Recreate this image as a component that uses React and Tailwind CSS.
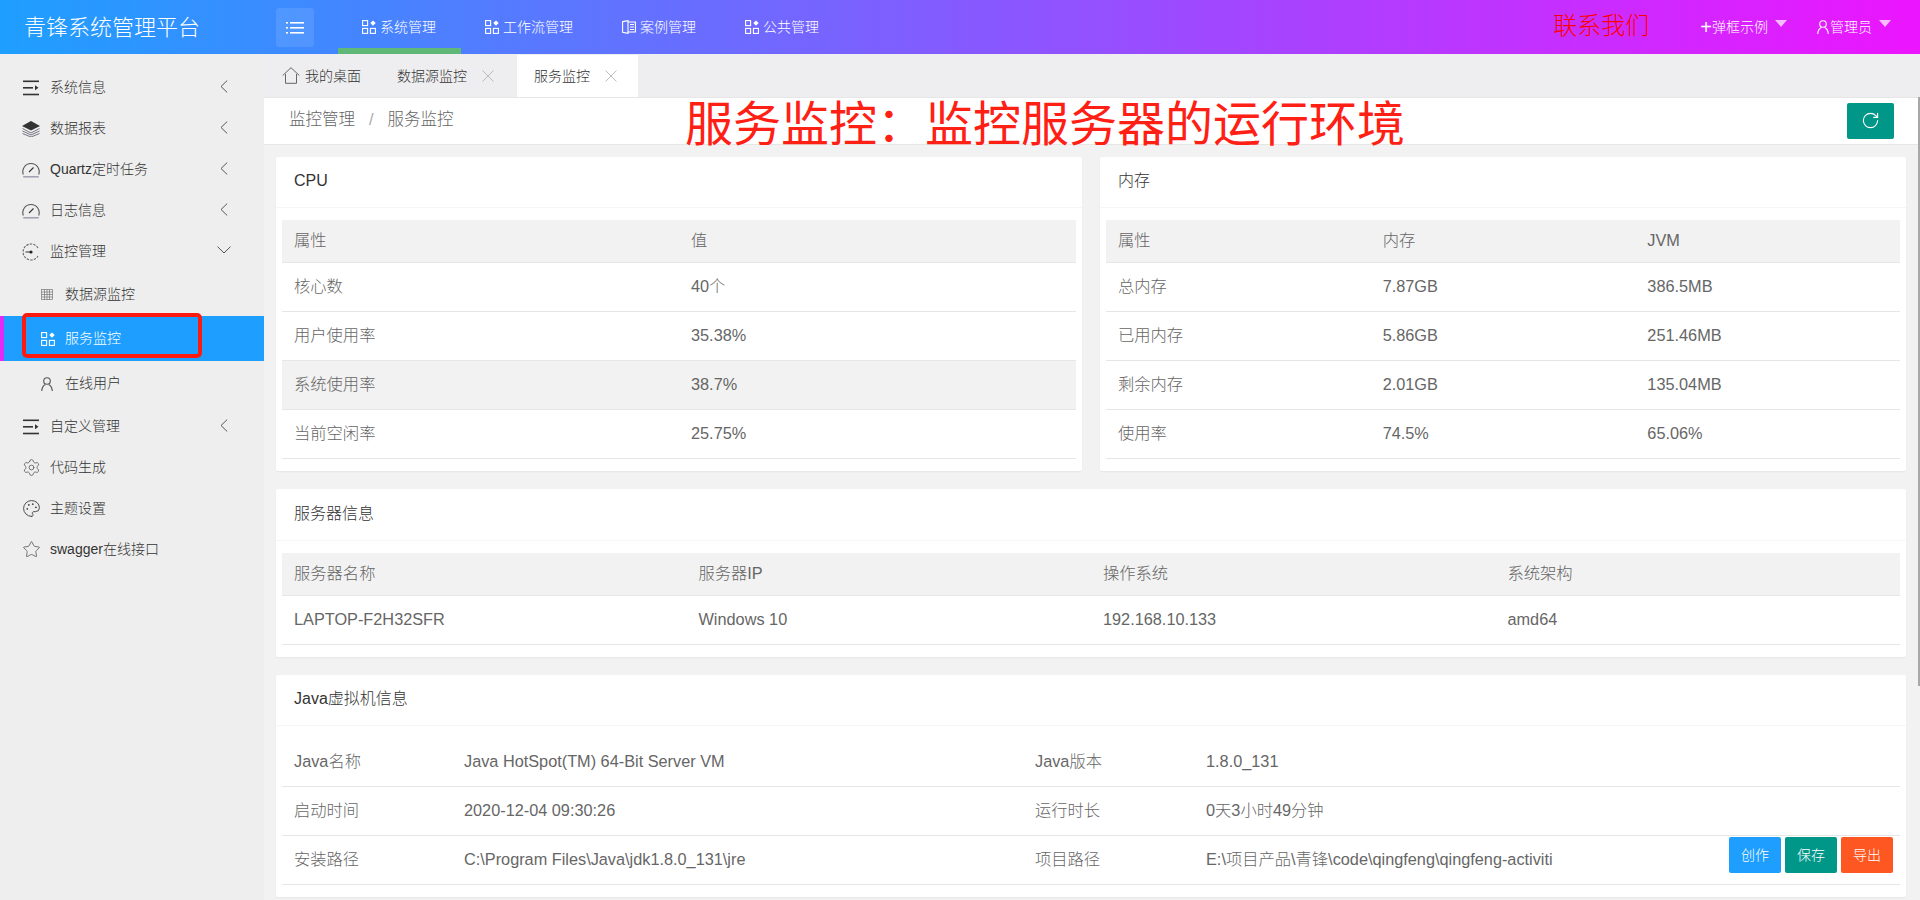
import React from "react";
import { RotateCw, Settings, Palette, Star } from "lucide-react";

const AppIcon = ({ className = "" }) => (
  <svg width="14" height="14" viewBox="0 0 14 14" className={className} fill="none" stroke="currentColor" strokeWidth="1.1">
    <rect x="0.6" y="0.6" width="5" height="5" />
    <rect x="0.6" y="8.4" width="5" height="5" />
    <rect x="8.4" y="8.4" width="5" height="5" />
    <path d="M11 0.4 L13.7 3.1 L11 5.8 L8.3 3.1 Z" fill="currentColor" stroke="none" />
  </svg>
);
const CaseIcon = () => (
  <svg width="14" height="14" viewBox="0 0 14 14" fill="none" stroke="currentColor" strokeWidth="1.1">
    <path d="M0.6 1.6 L6 0.6 V13.4 L0.6 12.4 Z" />
    <path d="M6 2 H13.4 V12 H6" />
    <path d="M8 4.5 H12 M8 7 H12 M8 9.5 H12" />
  </svg>
);
const MenuIcon = () => (
  <svg width="18" height="12" viewBox="0 0 18 12" fill="white">
    <rect x="0" y="0" width="2" height="1.6" /><rect x="4" y="0" width="14" height="1.6" />
    <rect x="0" y="5" width="2" height="1.6" /><rect x="4" y="5" width="14" height="1.6" />
    <rect x="0" y="10" width="2" height="1.6" /><rect x="4" y="10" width="14" height="1.6" />
  </svg>
);
const IndentIcon = () => (
  <svg width="18" height="16" viewBox="0 0 18 16" fill="#333">
    <rect x="1" y="0.5" width="16" height="1.6" />
    <rect x="1" y="7" width="10" height="1.6" />
    <path d="M13 5.3 L16.5 7.8 L13 10.3 Z" />
    <rect x="1" y="13.7" width="16" height="1.6" />
  </svg>
);
const LayersIcon = () => (
  <svg width="18" height="16" viewBox="0 0 18 16" fill="none">
    <path d="M9 0 L18 5 L9 9.5 L0 5 Z" fill="#333" />
    <path d="M0.5 7.5 L9 12 L17.5 7.5 M0.5 10 L9 14 L17.5 10 M0.5 12.5 L9 16 L17.5 12.5" stroke="#667" strokeWidth="0.9" />
  </svg>
);
const GaugeIcon = () => (
  <svg width="18" height="17" viewBox="0 0 18 17" fill="none" stroke="#555" strokeWidth="1.1">
    <path d="M1.3 13.5 A8.2 8.2 0 1 1 16.7 13.5" />
    <path d="M1.2 15.8 H16.8" stroke="#99a" strokeWidth="1.4" />
    <path d="M7 11 L11.5 6.5" stroke="#333" />
  </svg>
);
const MonitorIcon = () => (
  <svg width="18" height="18" viewBox="0 0 18 18" fill="none">
    <path d="M16 5 A8 8 0 1 0 16 13" stroke="#666" strokeWidth="1.1" strokeDasharray="2.4 1.2" />
    <path d="M3.5 9 H9" stroke="#333" strokeWidth="1" />
    <circle cx="9" cy="9" r="1.6" fill="#222" />
  </svg>
);
const TableIcon = () => (
  <svg width="12" height="11" viewBox="0 0 12 11" fill="none" stroke="#777" strokeWidth="0.7">
    <rect x="0.5" y="0.5" width="11" height="10" />
    <path d="M0.5 3 H11.5 M0.5 5.5 H11.5 M0.5 8 H11.5 M3.5 0.5 V10.5 M6 0.5 V10.5 M8.5 0.5 V10.5" />
  </svg>
);
const UserIcon = ({ className = "" }) => (
  <svg width="12" height="14" viewBox="0 0 12 14" fill="none" stroke="currentColor" strokeWidth="1.1" className={className}>
    <circle cx="6" cy="4" r="3.3" />
    <path d="M0.7 14 C1 10 3 8 4.4 7.4 M11.3 14 C11 10 9 8 7.6 7.4" />
  </svg>
);
const Left = () => (
  <svg width="8" height="13" viewBox="0 0 8 13" fill="none" stroke="#555" strokeWidth="1" className="ml-auto mr-[36px] mb-[3px]">
    <path d="M7.2 0.5 L1 6.5 L7.2 12.5" />
  </svg>
);
const Down = () => (
  <svg width="14" height="8" viewBox="0 0 14 8" fill="none" stroke="#555" strokeWidth="1" className="ml-auto mr-[33px] mb-[3px]">
    <path d="M0.5 0.6 L7 7 L13.5 0.6" />
  </svg>
);
const Cross = () => (
  <svg width="12" height="12" viewBox="0 0 12 12" fill="none" stroke="#bbb" strokeWidth="1">
    <path d="M0.5 0.5 L11.5 11.5 M11.5 0.5 L0.5 11.5" />
  </svg>
);
const House = () => (
  <svg width="18" height="17" viewBox="0 0 18 17" fill="none" stroke="#666" strokeWidth="1">
    <path d="M0.7 8.5 L9 0.7 L17.3 8.5" />
    <path d="M3.5 7 V16.3 H14.5 V7" />
  </svg>
);
const Caret = () => (
  <span className="ml-[7px] mb-[8px] w-0 h-0 border-x-[6.5px] border-x-transparent border-t-[7px] border-t-white/70" />
);

const NavItem = ({ icon, label, active }) => (
  <div className={`relative flex items-center pl-[24px] pr-[25px] text-[14px] text-white ${active ? "border-b-[6px] border-b-[#5fb878] pt-[6px]" : ""}`}>
    <span className="mr-[4px] flex">{icon}</span>
    {label}
  </div>
);

const Side = ({ icon, label, arrow }) => (
  <div className="h-[41px] flex items-center pl-[22px] text-[14px] text-[#333]">
    <span className="w-[28px] flex">{icon}</span>
    {label}
    {arrow === "left" && <Left />}
    {arrow === "down" && <Down />}
  </div>
);
const Sub = ({ icon, label, active, first }) => (
  <div className={`flex items-center text-[14px] ${first ? "h-[44px]" : "h-[45px]"} ${active ? "bg-[#1e9fff] text-white border-l-[4px] border-l-[#e02cf5] pl-[37px]" : "text-[#333] pl-[41px]"}`}>
    <span className="w-[24px] flex">{icon}</span>
    {label}
  </div>
);

const Card = ({ title, children, className = "", tall }) => (
  <section className={`bg-white rounded-[2px] shadow-[0_1px_2px_rgba(0,0,0,0.05)] ${className}`}>
    <div className={`flex items-center px-[18px] pb-[2px] text-[16px] text-[#333] border-b border-b-[#f6f6f6] ${tall ? "h-[52px]" : "h-[51px]"}`}>{title}</div>
    <div className="px-[6px] py-[12px]">{children}</div>
  </section>
);

const Row = ({ cols, cells, head, hover }) => (
  <div className={`grid ${cols} text-[16.3px] text-[#666] border-b border-b-[#e6e6e6] items-center pb-[2px] ${head ? "h-[43px] bg-[#f2f2f2]" : "h-[49px]"} ${hover ? "bg-[#f2f2f2]" : ""}`}>
    {cells.map((c, i) => (
      <div key={i} className="px-[12px] whitespace-nowrap">{c}</div>
    ))}
  </div>
);

export default function App() {
  return (
    <div className="relative w-[1920px] h-[900px] overflow-hidden bg-[#f2f2f2] font-['Liberation_Sans','Noto_Sans_CJK_SC',sans-serif] font-light">
      <header className="h-[54px] flex bg-linear-to-r/srgb from-[#1e9fff] to-[#ec15ff] text-white">
        <div className="w-[276px] pl-[24px] flex items-center text-[22px]">青锋系统管理平台</div>
        <div className="w-[38px] h-[39px] mt-[8px] bg-white/10 rounded-[3px] flex items-center justify-center">
          <MenuIcon />
        </div>
        <nav className="ml-[24px] flex">
          <NavItem active icon={<AppIcon />} label="系统管理" />
          <NavItem icon={<AppIcon />} label="工作流管理" />
          <NavItem icon={<CaseIcon />} label="案例管理" />
          <NavItem icon={<AppIcon />} label="公共管理" />
        </nav>
        <div className="ml-auto mr-[29px] flex items-center text-[14px]">
          <span className="mr-[51px] mb-[2px] text-[24px] text-[#ff0000]">联系我们</span>
          <span className="text-[20px] leading-none">+</span>
          <span>弹框示例</span>
          <Caret />
          <UserIcon className="ml-[30px] mr-[1px]" />
          <span>管理员</span>
          <Caret />
        </div>
      </header>

      <div className="flex h-[846px]">
        <aside className="w-[264px] shrink-0 bg-[#eeeeee] pt-[13px]">
          <Side icon={<IndentIcon />} label="系统信息" arrow="left" />
          <Side icon={<LayersIcon />} label="数据报表" arrow="left" />
          <Side icon={<GaugeIcon />} label="Quartz定时任务" arrow="left" />
          <Side icon={<GaugeIcon />} label="日志信息" arrow="left" />
          <Side icon={<MonitorIcon />} label="监控管理" arrow="down" />
          <Sub first icon={<TableIcon />} label="数据源监控" />
          <Sub active icon={<AppIcon />} label="服务监控" />
          <Sub icon={<UserIcon className="text-[#555]" />} label="在线用户" />
          <Side icon={<IndentIcon />} label="自定义管理" arrow="left" />
          <Side icon={<Settings size={19} strokeWidth={1} color="#555" />} label="代码生成" />
          <Side icon={<Palette size={19} strokeWidth={1.2} color="#444" />} label="主题设置" />
          <Side icon={<Star size={19} strokeWidth={1} color="#555" />} label="swagger在线接口" />
        </aside>

        <main className="flex-1 min-w-0 flex flex-col">
          <div className="h-[43px] bg-[#eeeef0] flex items-end text-[14px] text-[#333]">
            <div className="h-[42px] flex items-center pl-[18px] w-[115px]">
              <span className="mr-[5px] mb-[2px] flex"><House /></span>我的桌面
            </div>
            <div className="h-[42px] flex items-center pl-[18px] w-[138px]">
              数据源监控<span className="ml-[15px] flex"><Cross /></span>
            </div>
            <div className="h-[42px] w-[121px] bg-white flex items-center pl-[17px]">
              服务监控<span className="ml-[15px] flex"><Cross /></span>
            </div>
          </div>
          <div className="h-[48px] bg-white border-y border-[#e6e6e6] flex items-center pl-[25px] pr-[26px] text-[16.5px] text-[#666]">
            <span className="mb-[4px]">监控管理<span className="mx-[14px] text-[#aaa]">/</span>服务监控</span>
            <button className="ml-auto mb-[1px] w-[47px] h-[36px] bg-[#009688] rounded-[2px] flex items-center justify-center text-white">
              <RotateCw size={19} strokeWidth={1.4} />
            </button>
          </div>

          <div className="pl-[12px] pr-[14px] pt-[12px] flex flex-col gap-[18px]">
            <div className="flex gap-[18px]">
              <Card title="CPU" className="flex-1">
                <Row head cols="grid-cols-2" cells={["属性", "值"]} />
                <Row cols="grid-cols-2" cells={["核心数", "40个"]} />
                <Row cols="grid-cols-2" cells={["用户使用率", "35.38%"]} />
                <Row hover cols="grid-cols-2" cells={["系统使用率", "38.7%"]} />
                <Row cols="grid-cols-2" cells={["当前空闲率", "25.75%"]} />
              </Card>
              <Card title="内存" className="flex-1">
                <Row head cols="grid-cols-3" cells={["属性", "内存", "JVM"]} />
                <Row cols="grid-cols-3" cells={["总内存", "7.87GB", "386.5MB"]} />
                <Row cols="grid-cols-3" cells={["已用内存", "5.86GB", "251.46MB"]} />
                <Row cols="grid-cols-3" cells={["剩余内存", "2.01GB", "135.04MB"]} />
                <Row cols="grid-cols-3" cells={["使用率", "74.5%", "65.06%"]} />
              </Card>
            </div>
            <Card tall title="服务器信息">
              <Row head cols="grid-cols-4" cells={["服务器名称", "服务器IP", "操作系统", "系统架构"]} />
              <Row cols="grid-cols-4" cells={["LAPTOP-F2H32SFR", "Windows 10", "192.168.10.133", "amd64"]} />
            </Card>
            <Card title="Java虚拟机信息">
              <Row cols="grid-cols-[170px_571px_171px_1fr]" cells={["Java名称", "Java HotSpot(TM) 64-Bit Server VM", "Java版本", "1.8.0_131"]} />
              <Row cols="grid-cols-[170px_571px_171px_1fr]" cells={["启动时间", "2020-12-04 09:30:26", "运行时长", "0天3小时49分钟"]} />
              <Row cols="grid-cols-[170px_571px_171px_1fr]" cells={["安装路径", "C:\\Program Files\\Java\\jdk1.8.0_131\\jre", "项目路径", "E:\\项目产品\\青锋\\code\\qingfeng\\qingfeng-activiti"]} />
            </Card>
          </div>
        </main>
      </div>

      {/* annotation overlays */}
      <div className="absolute left-[22px] top-[313px] w-[180px] h-[45px] border-[4px] border-[#ff1a10] rounded-[5px]" />
      <div className="absolute left-[685px] top-[91px] text-[48px] leading-[68px] font-normal text-[#ff2015] whitespace-nowrap">服务监控：监控服务器的运行环境</div>

      {/* floating actions */}
      <div className="absolute left-[1729px] top-[837px] flex gap-[4px] text-[14px] text-white">
        <button className="w-[52px] h-[36px] rounded-[2px] bg-[#1e9fff]">创作</button>
        <button className="w-[52px] h-[36px] rounded-[2px] bg-[#009688]">保存</button>
        <button className="w-[52px] h-[36px] rounded-[2px] bg-[#ff5722]">导出</button>
      </div>

      {/* page scrollbar thumb */}
      <div className="absolute right-0 top-[97px] w-[2px] h-[589px] bg-[#a8a8a8]" />
    </div>
  );
}
